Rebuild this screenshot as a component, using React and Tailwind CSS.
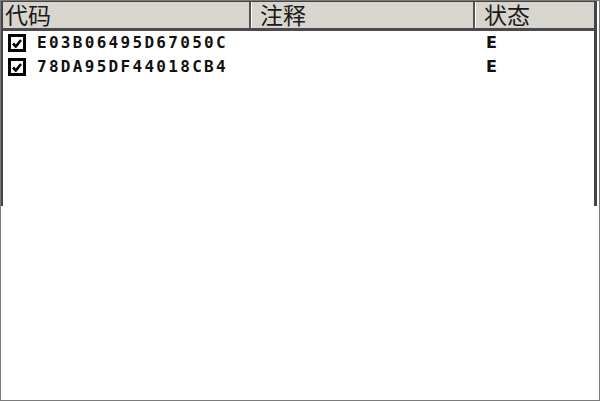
const rows = [
  { code: 'E03B06495D67050C', note: '', state: 'E' },
  { code: '78DA95DF44018CB4', note: '', state: 'E' },
];

function CheckBox() {
  return (
    <div className="w-[18px] h-[18px] border-[3px] border-black bg-white flex items-center justify-center">
      <svg width="10" height="9" viewBox="0 0 10 9">
        <path d="M1 4.5l2.8 3l5.2-6.5" fill="none" stroke="#000" strokeWidth="2.6" />
      </svg>
    </div>
  );
}

export default function App() {
  return (
    <div className="w-[600px] h-[401px] bg-white border border-[#7a7a7a] overflow-hidden">
      <div className="w-[597px] h-[206px] -ml-px -mt-px border-l-[3px] border-r-[3px] border-t-2 border-[#444] bg-white">
        <div
          className="flex items-center h-[29px] bg-[#d8d4ce] border-b-[3px] border-[#4a4a4a] text-[#1a1a1a]"
          style={{ fontFamily: '"Noto Sans CJK SC", sans-serif' }}
        >
          <div className="w-[248px] h-full border-r-2 border-[#555] pl-[2px] text-[23px] leading-[25px]">代码</div>
          <div className="w-[224px] h-full border-l border-white border-r-2 border-r-[#555] pl-[8px] text-[23px] leading-[25px]">注释</div>
          <div className="flex-1 h-full border-l border-white pl-[8px] text-[23px] leading-[25px]">状态</div>
        </div>
        <div>
          {rows.map((r) => (
            <div key={r.code} className="flex items-center h-[24px]">
              <div className="w-[248px] flex items-center pl-[5px] gap-[11px]">
                <CheckBox />
                <span
                  className="text-[16px] font-bold tracking-[2.3px] text-[#111]"
                  style={{ fontFamily: '"DejaVu Sans Mono", monospace' }}
                >
                  {r.code}
                </span>
              </div>
              <div className="w-[235px]">{r.note}</div>
              <span
                className="text-[16px] font-bold text-[#111]"
                style={{ fontFamily: '"DejaVu Sans", sans-serif' }}
              >
                {r.state}
              </span>
            </div>
          ))}
        </div>
      </div>
    </div>
  );
}
